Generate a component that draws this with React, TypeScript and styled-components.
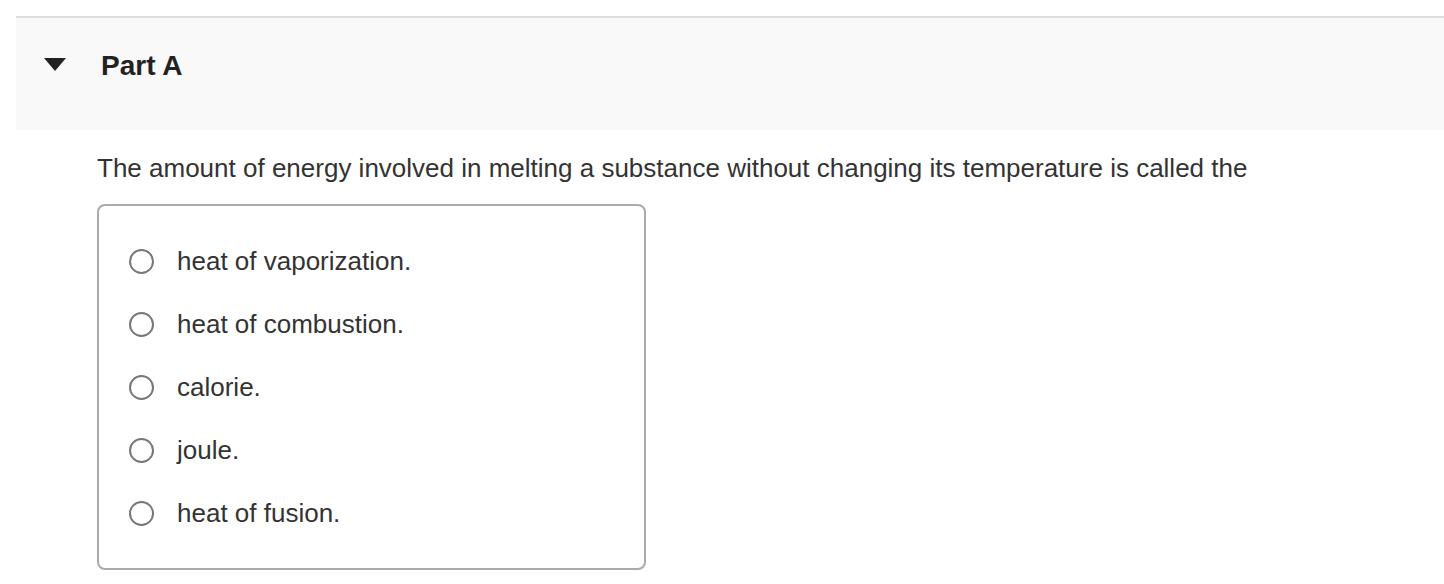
import styled, { createGlobalStyle } from "styled-components";

const GlobalStyle = createGlobalStyle`
  html, body {
    margin: 0;
    padding: 0;
    background: #ffffff;
    font-family: "Liberation Sans", Arial, Helvetica, sans-serif;
    color: #333333;
  }
`;

const Page = styled.main`
  padding: 16px 0 0 16px;
`;

const PartHeader = styled.div`
  display: flex;
  align-items: center;
  height: 32px;
  padding: 32px 0 48px 28px;
  border-top: 2px solid #dddddd;
  background: #f9f9f9;
`;

const Caret = styled.span`
  width: 0;
  height: 0;
  border-left: 11px solid transparent;
  border-right: 11px solid transparent;
  border-top: 13px solid #222222;
  margin: -3px 35px 0 0;
`;

const PartTitle = styled.h2`
  margin: 0;
  font-size: 28px;
  line-height: 32px;
  font-weight: 700;
  color: #222222;
`;

const Body = styled.div`
  padding: 22px 0 0 81px;
`;

const Prompt = styled.p`
  margin: 0 0 20px;
  font-size: 26px;
  line-height: 32px;
  color: #333333;
`;

const Options = styled.div`
  width: 549px;
  box-sizing: border-box;
  border: 2px solid #aaaaaa;
  border-radius: 8px;
  padding: 35px 0 35px 30px;
  display: flex;
  flex-direction: column;
  gap: 23px;
`;

const Option = styled.label`
  display: flex;
  align-items: center;
  height: 40px;
  font-size: 26px;
  color: #333333;
  cursor: pointer;
`;

const Radio = styled.span`
  width: 25px;
  height: 25px;
  box-sizing: border-box;
  border: 2px solid #777777;
  border-radius: 50%;
  background: #ffffff;
  margin-right: 23px;
  flex-shrink: 0;
`;

const choices = [
  "heat of vaporization.",
  "heat of combustion.",
  "calorie.",
  "joule.",
  "heat of fusion.",
];

export default function App() {
  return (
    <>
      <GlobalStyle />
      <Page>
        <PartHeader>
          <Caret />
          <PartTitle>Part A</PartTitle>
        </PartHeader>
        <Body>
          <Prompt>
            The amount of energy involved in melting a substance without
            changing its temperature is called the
          </Prompt>
          <Options>
            {choices.map((c) => (
              <Option key={c}>
                <Radio />
                {c}
              </Option>
            ))}
          </Options>
        </Body>
      </Page>
    </>
  );
}
